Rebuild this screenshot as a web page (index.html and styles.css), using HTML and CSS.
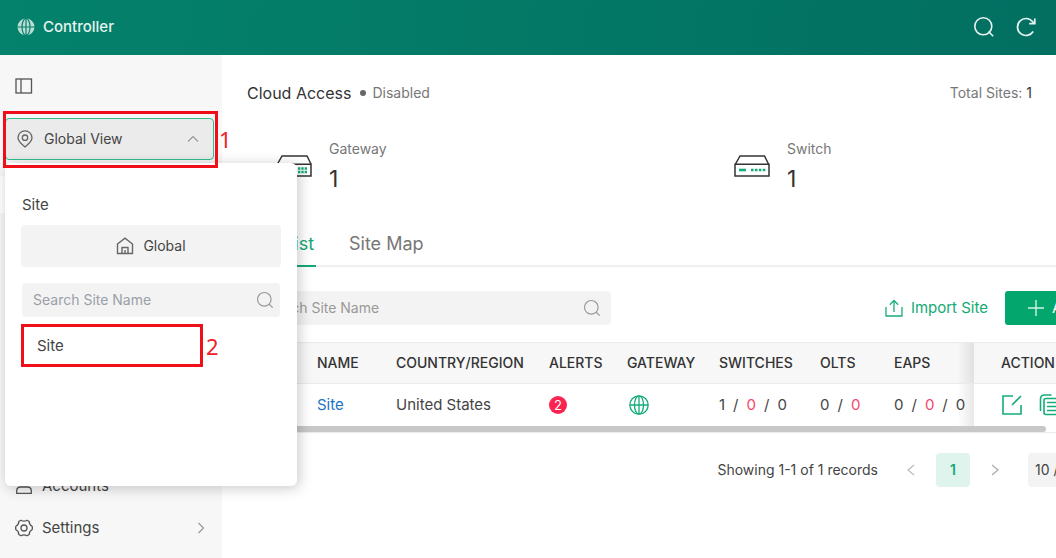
FILE: index.html
```html
<!DOCTYPE html>
<html lang="en">
<head>
<meta charset="utf-8">
<title>Controller</title>
<link rel="stylesheet" href="styles.css">
</head>
<body>
<header class="topbar">
  <svg class="logo" width="18" height="18" viewBox="0 0 18 18"><circle cx="9" cy="9" r="8.5" fill="#b9dcd4"/><g fill="none" stroke="#04806a" stroke-width="1.2"><ellipse cx="9" cy="9" rx="4" ry="8.5"/><path d="M9 0v18M0 9h18"/></g></svg>
  <h1 class="brand">Controller</h1>
  <button class="icon-btn" aria-label="Search"><svg width="22" height="22" viewBox="0 0 22 22" fill="none" stroke="#e8f4f1" stroke-width="1.6"><circle cx="10.300" cy="10.300" r="8.500"/><path d="M15.500 15.500l4.700 4.700"/></svg></button>
  <button class="icon-btn" aria-label="Refresh"><svg width="22" height="22" viewBox="0 0 22 22" fill="none" stroke="#e8f4f1" stroke-width="1.7"><path d="M18.200 15.500A8.500 8.500 0 1 1 17.500 5.500l2 2M19.800 2.500v5.200h-5.600"/></svg></button>
</header>
<div class="layout">
  <aside class="sidebar">
    <div class="side-top">
      <button class="icon-btn" aria-label="Collapse menu"><svg width="18" height="16" viewBox="0 0 18 16" fill="none" stroke="#555" stroke-width="1.3"><rect x="1" y="1" width="15.500" height="14"/><path d="M6 1v14"/></svg></button>
      <button class="view-select">
        <svg width="18" height="18" viewBox="0 0 18 18" fill="none" stroke="#666" stroke-width="1.300"><path d="M9 17C5.500 14 2 11.500 2 7.800a7 7 0 0 1 14 0C16 11.500 12.500 14 9 17z"/><circle cx="9" cy="7.700" r="2.700"/></svg>
        <span class="grow">Global View</span>
        <svg width="12" height="8" viewBox="0 0 12 8" fill="none" stroke="#999" stroke-width="1.200"><path d="M1 6.500l5-5 5 5"/></svg>
      </button>
    </div>
    <nav class="side-nav">
      <a class="nav-item" href="#accounts">
        <svg width="18" height="18" viewBox="0 0 18 18" fill="none" stroke="#555" stroke-width="1.300"><circle cx="9" cy="4.500" r="3.500"/><path d="M1.700 16.300v-2.300q0-4 4-4h6.600q4 0 4 4v2.300z"/></svg>
        <span class="grow">Accounts</span>
      </a>
      <a class="nav-item" href="#settings">
        <svg width="18" height="18" viewBox="0 0 18 18" fill="none" stroke="#555" stroke-width="1.300"><path d="M6 1.200Q9 3.200 12 1.200L14.200 2.500Q14.200 6 17.300 7.500V10.500Q14.200 12 14.200 15.500L12 16.800Q9 14.800 6 16.800L3.800 15.500Q3.800 12 .7 10.500V7.500Q3.800 6 3.800 2.500z" stroke-linejoin="round"/><circle cx="9" cy="9" r="3"/></svg>
        <span class="grow">Settings</span>
        <svg width="8" height="12" viewBox="0 0 8 12" fill="none" stroke="#999" stroke-width="1.200"><path d="M1.500 1l5 5-5 5"/></svg>
      </a>
    </nav>
  </aside>
  <main class="main">
    <div class="title-row">
      <h2 class="title">Cloud Access</h2><span class="dot"></span><span class="muted grow">Disabled</span>
      <span class="muted">Total Sites: <b class="count">1</b></span>
    </div>
    <div class="stats">
      <div class="stat">
        <svg width="36" height="22" viewBox="0 0 36 22" fill="none" stroke="#333" stroke-width="1.500"><path d="M1 9.200h34V21H1zM1.500 9L6 1h25l4 8"/><path d="M22 13.500h9M22 17h9" stroke="#14ad78" stroke-width="2.400" stroke-dasharray="2.400 .9"/></svg>
        <div class="stat-text"><span class="muted">Gateway</span><span class="value">1</span></div>
      </div>
      <div class="stat">
        <svg width="36" height="22" viewBox="0 0 36 22" fill="none" stroke="#333" stroke-width="1.500"><path d="M1 9.200h34V21H1zM1.500 9L6 1h24.500l4 8"/><path d="M5 15h7" stroke="#14ad78" stroke-width="2.600"/><path d="M17 15h15" stroke="#14ad78" stroke-width="2.600" stroke-dasharray="2.600 1.300"/></svg>
        <div class="stat-text"><span class="muted">Switch</span><span class="value">1</span></div>
      </div>
    </div>
    <div class="tabs">
      <a class="tab tab-on" href="#list">Site List</a>
      <a class="tab" href="#map">Site Map</a>
    </div>
    <section class="list">
      <div class="toolbar">
        <div class="search list-search">
          <input class="search-input" type="text" placeholder="Search Site Name" aria-label="Search sites in list">
          <svg width="18" height="18" viewBox="0 0 18 18" fill="none" stroke="#999" stroke-width="1.200"><circle cx="8.300" cy="8.300" r="6.800"/><path d="M13 13l3.700 3.700"/></svg>
        </div>
        <button class="import"><svg width="18" height="18" viewBox="0 0 18 18" fill="none" stroke="#14ad78" stroke-width="1.300"><path d="M1 8v9h16V8M9 13V1.500M4.800 5.700L9 1.500l4.200 4.200"/></svg>Import Site</button>
        <button class="add"><svg width="16" height="16" viewBox="0 0 16 16" fill="none" stroke="#d5f2e7" stroke-width="1.400"><path d="M8 0v16M0 8h16"/></svg>Add</button>
      </div>
      <table class="table">
        <colgroup><col class="c-check"><col class="c-name"><col class="c-country"><col class="c-alerts"><col class="c-gateway"><col class="c-switches"><col class="c-olts"><col class="c-eaps"><col></colgroup>
        <thead><tr><th></th><th>NAME</th><th>COUNTRY/REGION</th><th>ALERTS</th><th>GATEWAY</th><th>SWITCHES</th><th>OLTS</th><th class="fade">EAPS</th><th class="action">ACTION</th></tr></thead>
        <tbody><tr>
          <td></td><td><a class="link" href="#site">Site</a></td><td>United States</td>
          <td><span class="badge">2</span></td>
          <td><svg class="cell-icon" width="20" height="20" viewBox="0 0 20 20" fill="none" stroke="#14ad78" stroke-width="1.300"><circle cx="10" cy="10" r="9.200"/><ellipse cx="10" cy="10" rx="4.500" ry="9.200"/><path d="M10 1v18M1 10h18"/></svg></td>
          <td><span class="nums"><i>1</i><i>/</i><i class="red">0</i><i>/</i><i>0</i></span></td>
          <td><span class="nums"><i>0</i><i>/</i><i class="red">0</i></span></td>
          <td class="fade"><span class="nums"><i>0</i><i>/</i><i class="red">0</i><i>/</i><i>0</i></span></td>
          <td class="action"><span class="actions">
            <button class="icon-btn" aria-label="Edit"><svg width="22" height="22" viewBox="0 0 22 22" fill="none" stroke="#14ad78" stroke-width="1.600"><path d="M12 2H2v18h18v-9M11 11l9-9"/></svg></button>
            <button class="icon-btn" aria-label="Copy"><svg width="22" height="22" viewBox="0 0 22 22" fill="none" stroke="#14ad78" stroke-width="1.600"><path d="M1.500 17V5q0-4 4-4h7"/><rect x="5" y="4.500" width="15" height="16" rx="2"/><path d="M8 8.500h9M8 12.500h9M8 16.500h9"/></svg></button>
          </span></td>
        </tr></tbody>
      </table>
      <div class="scroll-track"><div class="scroll-thumb"></div></div>
      <div class="pager">
        <span class="records">Showing 1-1 of 1 records</span>
        <button class="step" aria-label="Previous page"><svg width="8" height="12" viewBox="0 0 8 12" fill="none" stroke="#bbb" stroke-width="1.200"><path d="M7 1L1 6l6 5"/></svg></button>
        <button class="page">1</button>
        <button class="step" aria-label="Next page"><svg width="8" height="12" viewBox="0 0 8 12" fill="none" stroke="#aaa" stroke-width="1.200"><path d="M1 1l6 5-6 5"/></svg></button>
        <select class="size" aria-label="Page size"><option>10 / page</option></select>
      </div>
    </section>
  </main>
</div>
<div class="popup">
  <h3 class="popup-title">Site</h3>
  <button class="global"><svg width="18" height="18" viewBox="0 0 18 18" fill="none" stroke="#666" stroke-width="1.400"><path d="M1.500 7L9 1.200 16.500 7v9.500h-15zM6 16.500V10.500h6v6"/><path d="M9 13v3.500"/></svg>Global</button>
  <div class="search popup-search">
    <input class="search-input cool" type="text" placeholder="Search Site Name" aria-label="Search Site Name">
    <svg width="18" height="18" viewBox="0 0 18 18" fill="none" stroke="#999" stroke-width="1.200"><circle cx="8.300" cy="8.300" r="6.800"/><path d="M13 13l3.700 3.700"/></svg>
  </div>
  <a class="option" href="#site">Site</a>
</div>
<div class="mark mark-view"></div><span class="mark-no no-view">1</span>
<div class="mark mark-site"></div><span class="mark-no no-site">2</span>
</body>
</html>
```
FILE: styles.css
```css
* { box-sizing: border-box; }
body {
  margin: 0;
  min-height: 100vh;
  display: flex;
  flex-direction: column;
  position: relative;
  overflow: hidden;
  font: 400 15px/20px Inter, "Open Sans", sans-serif;
  color: #444;
  background: #fff;
}
h1, h2, h3 { margin: 0; font-weight: 400; }
button { font: inherit; color: inherit; border: 0; background: none; padding: 0; }
a { color: inherit; text-decoration: none; }
svg { flex: none; display: block; }
.grow { flex: 1; text-align: left; }
.topbar {
  height: 55px;
  display: flex;
  align-items: center;
  gap: 20px;
  padding: 0 19px 2px 17px;
  background: linear-gradient(100deg, #04826b, #026f61);
}
.brand { flex: 1; margin-left: -12px; font-size: 15px; font-weight: 500; color: #e6f3f0; }
.layout { flex: 1; display: flex; }
.sidebar {
  width: 222px;
  flex: none;
  display: flex;
  flex-direction: column;
  gap: 37px;
}
.side-top { height: 121px; padding: 23px 8px 0 5px; background: #f7f7f7; }
.side-top .icon-btn { display: block; margin-left: 10px; }
.view-select {
  display: flex;
  align-items: center;
  gap: 10px;
  width: 100%;
  height: 42px;
  margin-top: 24px;
  padding: 0 14px 0 10px;
  font-size: 14px;
  background: #ebebeb;
  border: 1px solid #2dc18c;
  border-radius: 4px;
}
.side-nav {
  flex: 1;
  display: flex;
  flex-direction: column;
  justify-content: flex-end;
  padding: 0 17px 9px 15px;
  background: #f7f7f7;
}
.nav-item { display: flex; align-items: center; gap: 9px; height: 42px; }
.main { flex: 1; min-width: 0; overflow: hidden; padding: 26px 0 0 25px; }
.title-row { display: flex; align-items: center; gap: 6px; height: 24px; padding-right: 24px; }
.title { font-size: 16px; color: #333; }
.dot { width: 6px; height: 6px; margin-left: 3px; border-radius: 50%; background: #666; }
.muted { font-size: 14px; color: #777; }
.count { font-weight: 400; color: #333; }
.stats { display: grid; grid-template-columns: 458px 1fr; padding: 34px 0 0 29px; }
.stat { display: flex; align-items: center; gap: 17px; }
.stat-text { display: flex; flex-direction: column; gap: 6px; }
.value { font-size: 23px; line-height: 28px; color: #333; }
.tabs { display: flex; gap: 33px; margin-top: 35px; border-bottom: 2px solid #f0f0f0; }
.tab { height: 39px; margin-bottom: -2px; font-size: 18px; line-height: 32px; color: #777; }
.tab-on { color: #14a974; border-bottom: 2px solid #14a974; width: 69px; white-space: nowrap; }
.list { margin: 24px -60px 0 0; }
.toolbar { display: flex; align-items: center; }
.search {
  display: flex;
  align-items: center;
  height: 34px;
  padding: 0 6px 0 11px;
  border-radius: 4px;
  background: #f3f3f3;
}
.search-input { flex: 1; min-width: 0; padding: 0; border: 0; background: none; font: inherit; font-size: 14px; outline: 0; }
.search-input::placeholder { color: #999; opacity: 1; }
.cool::placeholder { color: #9a9fa9; }
.list-search { width: 364px; margin-right: auto; padding: 0 10px 0 14px; }
.popup-search { margin: 0 1px; }
.import { display: flex; align-items: center; gap: 8px; margin-right: 17px; color: #14a974; }
.add {
  display: flex;
  align-items: center;
  gap: 8px;
  height: 34px;
  width: 111px;
  padding-left: 23px;
  border-radius: 3px;
  background: #03a66d;
  color: #fff;
  white-space: nowrap;
}
.table { width: 100%; margin-top: 17px; table-layout: fixed; border-collapse: separate; border-spacing: 0; }
.table th, .table td { height: 42px; padding: 0 0 0 12px; text-align: left; white-space: nowrap; }
.table th { background: #f7f7f7; font-size: 14px; font-weight: 500; color: #333; border-top: 1px solid #ebebeb; border-bottom: 1px solid #ebebeb; }
.c-check { width: 58px; }
.c-name { width: 79px; }
.c-country { width: 153px; }
.c-alerts { width: 78px; }
.c-gateway { width: 92px; }
.c-switches { width: 101px; }
.c-olts { width: 74px; }
.c-eaps { width: 92px; }
.table .fade { background-image: linear-gradient(to right, transparent 82%, rgba(0, 0, 0, .09)); }
.table .action { padding-left: 27px; }
.link { color: #1a73c9; }
.badge {
  display: block;
  width: 18px;
  height: 18px;
  border-radius: 50%;
  background: #fb2350;
  color: #fff;
  font-size: 13px;
  line-height: 18px;
  text-align: center;
}
.cell-icon { margin-left: 2px; }
.nums { display: flex; gap: 8px; }
.nums i { font-style: normal; }
.nums .red { color: #f5476b; }
.actions { display: flex; gap: 16px; }
.scroll-track { border-bottom: 1px solid #ebebeb; }
.scroll-thumb { width: 92%; height: 6px; border-radius: 3px; background: #c8c8c8; }
.pager { display: flex; align-items: center; justify-content: flex-end; margin-top: 20px; font-size: 14px; }
.step { display: flex; align-items: center; justify-content: center; width: 34px; height: 34px; }
.records { margin-right: 16px; }
.page { width: 34px; height: 34px; margin: 0 8px; border-radius: 4px; background: #dff4ec; color: #14a974; font-weight: 600; }
.size { appearance: none; width: 88px; height: 34px; margin-left: 16px; padding: 0 7px; border: 0; border-radius: 4px; background: #f3f3f3; font: inherit; color: #444; }
.popup {
  position: absolute;
  left: 5px;
  top: 163px;
  width: 292px;
  height: 323px;
  padding: 32px 16px;
  border-radius: 6px;
  background: #fff;
  box-shadow: 2px 2px 14px rgba(0, 0, 0, .22);
}
.popup-title { font-size: 15px; line-height: 20px; margin-left: 1px; }
.global {
  display: flex;
  align-items: center;
  justify-content: center;
  gap: 9px;
  width: 100%;
  height: 42px;
  margin: 10px 0 16px;
  border-radius: 4px;
  background: #f3f3f3;
  font-size: 14px;
}
.option { display: block; margin-top: 8px; padding: 0 16px; line-height: 41px; }
.mark { position: absolute; border: 3px solid #ee0f18; }
.mark-view { left: 3px; top: 111px; width: 215px; height: 57px; }
.mark-site { left: 21px; top: 324px; width: 182px; height: 43px; }
.mark-no { position: absolute; font: 22px/28px "Noto Sans", sans-serif; color: #ee2028; }
.no-view { left: 219px; top: 125px; }
.no-site { left: 206px; top: 332px; }
```
